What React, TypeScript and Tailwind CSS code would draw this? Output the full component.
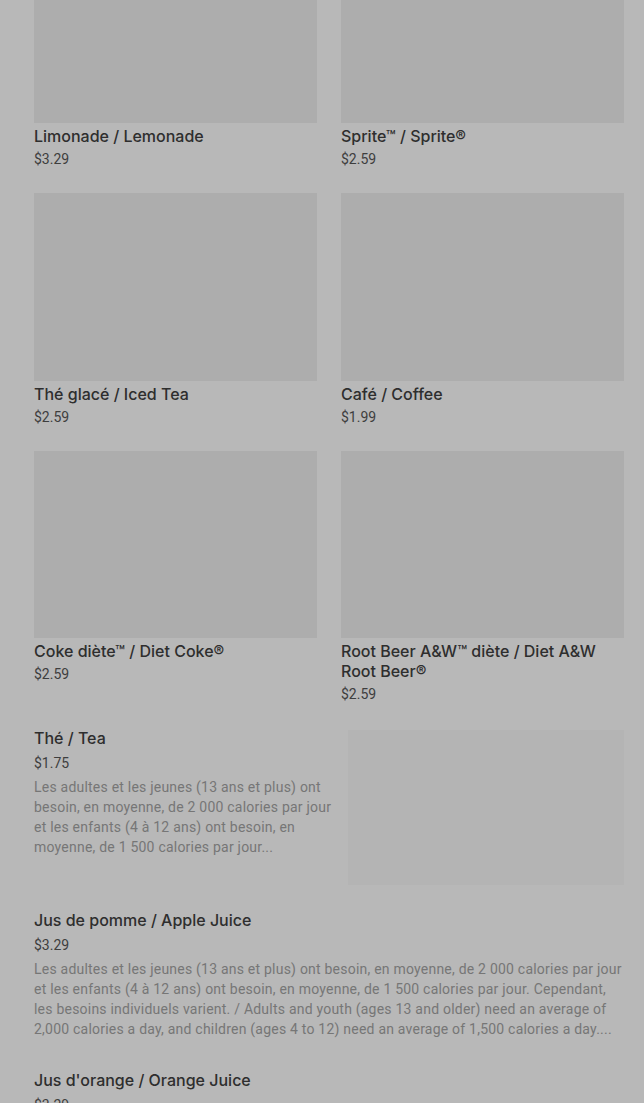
import React from 'react';

// ドリンクメニュー（オーバーレイ下の状態）
interface GridItem {
  name: string;
  price: string;
}

interface ListItem {
  name: string;
  price: string;
  desc: string;
  image?: boolean;
}

const gridItems: GridItem[] = [
  { name: 'Limonade / Lemonade', price: '$3.29' },
  { name: 'Sprite™ / Sprite®', price: '$2.59' },
  { name: 'Thé glacé / Iced Tea', price: '$2.59' },
  { name: 'Café / Coffee', price: '$1.99' },
  { name: 'Coke diète™ / Diet Coke®', price: '$2.59' },
  { name: 'Root Beer A&W™ diète / Diet A&W Root Beer®', price: '$2.59' },
];

const shortDesc =
  'Les adultes et les jeunes (13 ans et plus) ont besoin, en moyenne, de 2 000 calories par jour et les enfants (4 à 12 ans) ont besoin, en moyenne, de 1 500 calories par jour...';

const longDesc =
  'Les adultes et les jeunes (13 ans et plus) ont besoin, en moyenne, de 2 000 calories par jour et les enfants (4 à 12 ans) ont besoin, en moyenne, de 1 500 calories par jour. Cependant, les besoins individuels varient. / Adults and youth (ages 13 and older) need an average of 2,000 calories a day, and children (ages 4 to 12) need an average of 1,500 calories a day....';

const listItems: ListItem[] = [
  { name: 'Thé / Tea', price: '$1.75', desc: shortDesc, image: true },
  { name: 'Jus de pomme / Apple Juice', price: '$3.29', desc: longDesc },
  { name: "Jus d'orange / Orange Juice", price: '$3.29', desc: longDesc },
];

const titleCls = "font-['Inter',sans-serif] text-[16px] leading-[20px] font-medium text-[#2e2e2e]";
const priceCls = 'text-[14px] leading-[20px] text-[#3e3e3e]';

const Card: React.FC<{ item: GridItem }> = ({ item }) => (
  <div className="flex flex-col">
    <div className="h-[187.5px] bg-[#adadad]" />
    <div className={`mt-[3px] ${titleCls}`}>{item.name}</div>
    <div className={`mt-[3px] ${priceCls}`}>{item.price}</div>
  </div>
);

const Row: React.FC<{ item: ListItem }> = ({ item }) => (
  <div className="flex gap-[16px] pb-[25px]">
    <div className="flex-1 min-w-0">
      <div className={titleCls}>{item.name}</div>
      <div className={`mt-[5px] ${priceCls}`}>{item.price}</div>
      <div className="mt-[4px] text-[14px] leading-[20px] tracking-[0.22px] text-[#767676]">{item.desc}</div>
    </div>
    {item.image && <div className="mt-[2px] w-[276px] h-[155px] shrink-0 bg-[#b4b4b4]" />}
  </div>
);

export default function App() {
  return (
    <div
      className="h-[1103px] overflow-hidden bg-[#b8b8b8] pl-[34px] pr-[20px]"
      style={{ fontFamily: 'Roboto, "Noto Sans", sans-serif' }}
    >
      <div className="-mt-[64.5px] grid grid-cols-2 gap-x-[24px] gap-y-[24px]">
        {gridItems.map((it) => (
          <Card key={it.name} item={it} />
        ))}
      </div>
      <div className="mt-[24px] flex flex-col">
        {listItems.map((it, i) => (
          <div key={it.name} className={i === 1 ? 'pb-[6px]' : ''}>
            <Row item={it} />
          </div>
        ))}
      </div>
    </div>
  );
}
